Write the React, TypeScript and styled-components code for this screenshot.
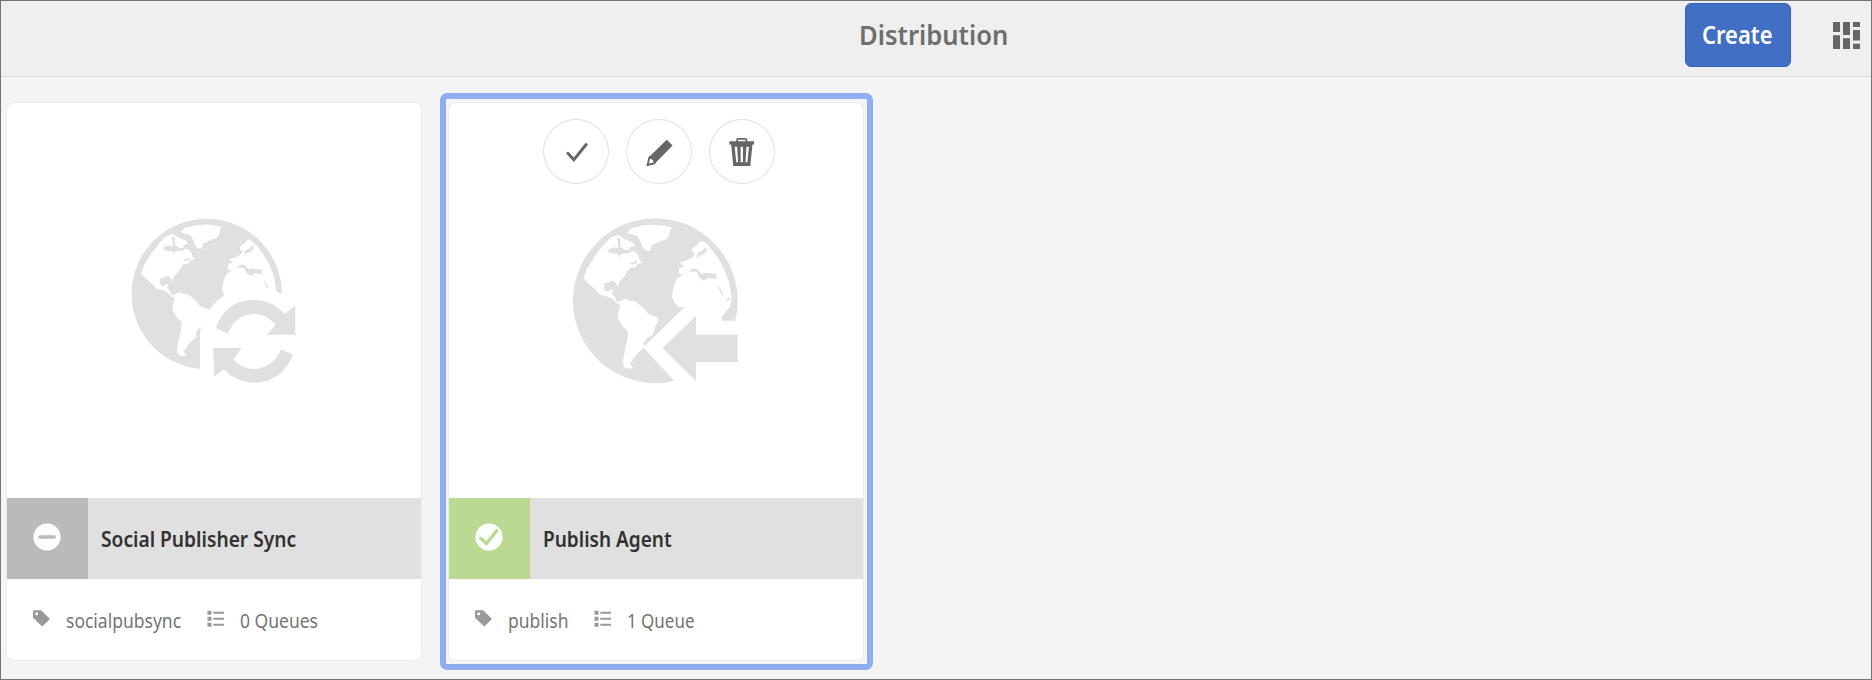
import React from "react";
import styled, { createGlobalStyle } from "styled-components";

const Global = createGlobalStyle`
  *, *::before, *::after { box-sizing: border-box; }
  html, body { margin: 0; padding: 0; }
  body { font-family: "Noto Sans", "Open Sans", sans-serif; }
`;

const Page = styled.div`
  width: 1872px;
  height: 680px;
  overflow: hidden;
  background: #f4f4f4;
  border: 1px solid #757575;
  display: flex;
  flex-direction: column;
`;

const Header = styled.header`
  height: 76px;
  flex: none;
  display: grid;
  grid-template-columns: 1fr auto 1fr;
  background: #efefef;
  border-bottom: 1px solid #dcdcdc;
`;

const Fit = styled.span<{ $x: number }>`
  display: inline-block;
  white-space: nowrap;
  transform: scaleX(${(p) => p.$x});
  transform-origin: left center;
`;

const Title = styled.h1`
  grid-column: 2;
  margin: 0;
  width: 154px;
  font-size: 27.5px;
  font-weight: 600;
  line-height: 68px;
  color: #6e6e6e;
`;

const Actions = styled.div`
  display: flex;
  justify-content: flex-end;
  align-items: flex-start;
  gap: 42px;
  padding: 2px 11px 0 0;
`;

const CreateButton = styled.button`
  width: 106px;
  height: 64px;
  padding: 0 0 0 16px;
  border: 1px solid #3263b8;
  border-radius: 6px;
  background: #416fc3;
  color: #fff;
  font: 600 24.5px/60px "Noto Sans", sans-serif;
  text-align: left;
`;

const ViewSwitch = styled.svg`
  width: 27px;
  height: 27px;
  margin-top: 19px;
  fill: #666;
`;

const Cards = styled.main`
  display: flex;
  gap: 9px;
  padding-top: 16px;
  margin-left: -3px;
`;

const Frame = styled.div<{ $selected?: boolean }>`
  width: 433px;
  height: 577px;
  padding: 3px 3px 3px 2px;
  border: 6px solid ${(p) => (p.$selected ? "#8faeef" : "transparent")};
  border-radius: 7px;
`;

const Card = styled.article`
  width: 416px;
  height: 559px;
  display: flex;
  flex-direction: column;
  background: #fff;
  border: 1px solid #ececec;
  border-radius: 8px;
`;

const Media = styled.div`
  height: 395px;
  position: relative;
  padding: 97px 0 0 103px;
`;

const Globe = styled.svg<{ $shift?: number }>`
  display: block;
  width: 210px;
  height: 200px;
  margin-left: ${(p) => p.$shift || 0}px;
`;

const QuickActions = styled.div`
  position: absolute;
  top: 16px;
  left: 93.5px;
  display: flex;
  gap: 17px;
`;

const RoundButton = styled.button`
  width: 66px;
  height: 65px;
  padding: 0;
  border: 1.5px solid #e2e2e2;
  border-radius: 50%;
  background: #fff;
  svg { display: block; width: 100%; height: 100%; }
`;

const TitleBar = styled.div`
  height: 81px;
  display: flex;
  background: #e0e0e0;
`;

const Status = styled.div<{ $color: string }>`
  width: 81px;
  height: 81px;
  background: ${(p) => p.$color};
  svg { display: block; margin: 25px 0 0 26px; width: 28px; height: 28px; }
`;

const CardTitle = styled.h2`
  margin: 0 0 0 12.5px;
  font-size: 21.5px;
  font-weight: 600;
  line-height: 81px;
  color: #323232;
`;

const Meta = styled.div`
  flex: 1;
  display: flex;
  align-items: flex-start;
  padding: 31px 0 0 26px;
`;

const MetaIcon = styled.svg`
  width: 17px;
  height: 17px;
  flex: none;
  fill: #999;
`;

const MetaText = styled.div<{ $w: number }>`
  width: ${(p) => p.$w}px;
  margin: -1px 0 0 16px;
  font-size: 19.5px;
  line-height: 24px;
  color: #757575;
`;

function GlobeShape() {
  return (
    <>
      <circle cx="316" cy="302" r="247" fill="#e0e0e0" />
      <g fill="#fff">
        <path d="M100 235L112 205L135 168L160 135L180 115L203 105L225 118L250 128L255 138L240 142L238 150L255 155L265 165L268 178L277 188L262 192L255 203L240 204L228 220L220 234L208 245L205 262L198 250L190 241L180 245L163 250L162 268L172 277L182 268L190 273L185 283L195 290L198 305L212 303L225 296L240 302L255 303L272 318L285 328L295 342L322 352L325 362L315 380L308 405L290 415L280 430L283 442L268 455L250 475L240 492L250 503L235 507L222 500L218 485L225 450L232 420L234 395L218 378L203 353L207 330L211 315L200 310L185 295L168 288L150 285L138 270L128 262L115 250Z" />
        <path d="M230 98L245 85L280 76L315 74L345 77L367 83L360 90L357 105L350 118L325 126L305 136L300 152L290 153L280 145L272 125L262 108L245 103Z" />
        <path d="M458 122L480 142L505 175L525 212L538 250L545 295L540 318L528 335L515 350V375H390L405 322L385 320L375 310L366 290L370 265L375 250L382 235L400 226L387 222V203L402 200L390 188L410 181L425 175L435 162L425 155L427 144L440 137L446 128Z" />
      </g>
      <g fill="#e0e0e0">
        <path d="M172 150L190 142L205 145L202 112L211 117V140L225 150L247 151L240 159L218 161L208 165L211 179L203 162L180 160Z" />
        <path d="M413 214L430 205L445 210L453 222L465 218L500 222V237L475 234L460 242L445 230L441 217L425 215Z" />
        <path d="M440 178L442 160L458 151L464 142L471 150L463 162L448 167Z M502 254L510 263L522 289L515 285Z M525 301L544 290L536 303Z M236 188L252 187L258 180L260 190L248 194Z" />
      </g>
    </>
  );
}

function SyncGlobe() {
  return (
    <Globe viewBox="0 0 630 600">
      <g transform="translate(290 282) scale(.913) translate(-316 -302)"><GlobeShape /></g>
      <path fill="#fff" d="M270 600V405Q270 370 297 332Q320 298 347 285Q400 262 480 264L515 281H630V600Z" />
      <path fill="#e0e0e0" d="M318 384C334 332 375 300 432 300C470 300 501 316 524 342L556 317V404H470L497 374C478 352 456 342 430 342C395 343 367 365 354 401Z" />
      <path fill="#e0e0e0" d="M310 444H396L370 478C388 498 408 507 432 507C470 506 500 483 513 448L548 464C530 515 488 548 432 548C395 547 365 534 342 508L312 530Z" />
    </Globe>
  );
}

function PublishGlobe() {
  return (
    <Globe viewBox="0 0 630 600" $shift={-2}>
      <GlobeShape />
      <path fill="#fff" d="M405 320L280 442L375 545L440 600H630V362H515V320Z" />
      <path fill="#e0e0e0" d="M338 444L438 347V404H563V486H438V543Z" />
    </Globe>
  );
}

function MetaRow({ name, nameWidth, queues, queueScale }: {
  name: string; nameWidth: number; queues: string; queueScale: number;
}) {
  return (
    <Meta>
      <MetaIcon viewBox="0 0 17 17">
        <path fillRule="evenodd" d="M0 1.2Q0 .2 1 .2H8.2L17 9L9.3 16.6L0 7.8ZM3.6 2.2A1.5 1.5 0 1 0 3.6 5.2A1.5 1.5 0 1 0 3.6 2.2Z" />
      </MetaIcon>
      <MetaText $w={nameWidth}><Fit $x={0.897}>{name}</Fit></MetaText>
      <MetaIcon viewBox="0 0 17 17">
        <path d="M.5 .8h4v4h-4zM.5 6.8h4v4h-4zM.5 12.8h4v4h-4zM6.3 1.8H17v2H6.3zM6.3 7.8H17v2H6.3zM6.3 13.8H17v2H6.3z" />
      </MetaIcon>
      <MetaText $w={90}><Fit $x={queueScale}>{queues}</Fit></MetaText>
    </Meta>
  );
}

export default function App() {
  return (
    <Page>
      <Global />
      <Header>
        <Title><Fit $x={0.93}>Distribution</Fit></Title>
        <Actions>
          <CreateButton><Fit $x={0.895}>Create</Fit></CreateButton>
          <ViewSwitch viewBox="0 0 27 27">
            <path d="M0 0h7v10H0zM0 13.2h7V27H0zM10 0h7v13H10zM10 16.2h7V27h-7zM20 0h7v5h-7zM20 8h7v10.4h-7zM20 21.8h7V27h-7z" />
          </ViewSwitch>
        </Actions>
      </Header>
      <Cards>
        <Frame>
          <Card>
            <Media><SyncGlobe /></Media>
            <TitleBar>
              <Status $color="#bababa">
                <svg viewBox="0 0 28 28">
                  <circle cx="14" cy="14" r="13.6" fill="#fff" />
                  <path d="M6.8 14H21.2" stroke="#bababa" strokeWidth="3.4" strokeLinecap="round" />
                </svg>
              </Status>
              <CardTitle><Fit $x={0.892}>Social Publisher Sync</Fit></CardTitle>
            </TitleBar>
            <MetaRow name="socialpubsync" nameWidth={141} queues="0 Queues" queueScale={0.897} />
          </Card>
        </Frame>
        <Frame $selected>
          <Card>
            <Media>
              <PublishGlobe />
              <QuickActions>
                <RoundButton aria-label="Select">
                  <svg viewBox="0 0 66 65">
                    <path d="M24.6 34.4L30.8 41L43.5 25.3" fill="none" stroke="#666" strokeWidth="3" strokeLinecap="round" />
                  </svg>
                </RoundButton>
                <RoundButton aria-label="Edit">
                  <svg viewBox="0 0 66 65" fill="#666">
                    <path fillRule="evenodd" d="M41 20.3L47 26.4L30.3 43.4Q29.5 45.3 27.8 46L20 47.6L22 38.8Q22.6 37.5 24 37ZM23.8 40.1L22.5 44.8L27.4 43.8L26.7 41.3Z" />
                  </svg>
                </RoundButton>
                <RoundButton aria-label="Delete">
                  <svg viewBox="0 0 66 65" fill="#666">
                    <path fillRule="evenodd" d="M20 22H27V20.7Q27 18.7 29 18.7H36.5Q38.5 18.7 38.5 20.7V22H45.5V25.2H43.8L41.6 47.5H24L21.8 25.2H20ZM28.8 22H36.7V20.5H28.8ZM25.5 27.5L27 43.5H29L28 27.5ZM31.6 27.5V43.5H34V27.5ZM37.6 27.5L36.6 43.5H38.6L40.1 27.5Z" />
                  </svg>
                </RoundButton>
              </QuickActions>
            </Media>
            <TitleBar>
              <Status $color="#bbd992">
                <svg viewBox="0 0 28 28">
                  <circle cx="14" cy="14" r="13.6" fill="#fff" />
                  <path d="M5.8 15.2L11.5 20.6L21.8 7.6" fill="none" stroke="#bbd992" strokeWidth="3.4" strokeLinecap="round" />
                </svg>
              </Status>
              <CardTitle><Fit $x={0.885}>Publish Agent</Fit></CardTitle>
            </TitleBar>
            <MetaRow name="publish" nameWidth={86} queues="1 Queue" queueScale={0.87} />
          </Card>
        </Frame>
      </Cards>
    </Page>
  );
}
